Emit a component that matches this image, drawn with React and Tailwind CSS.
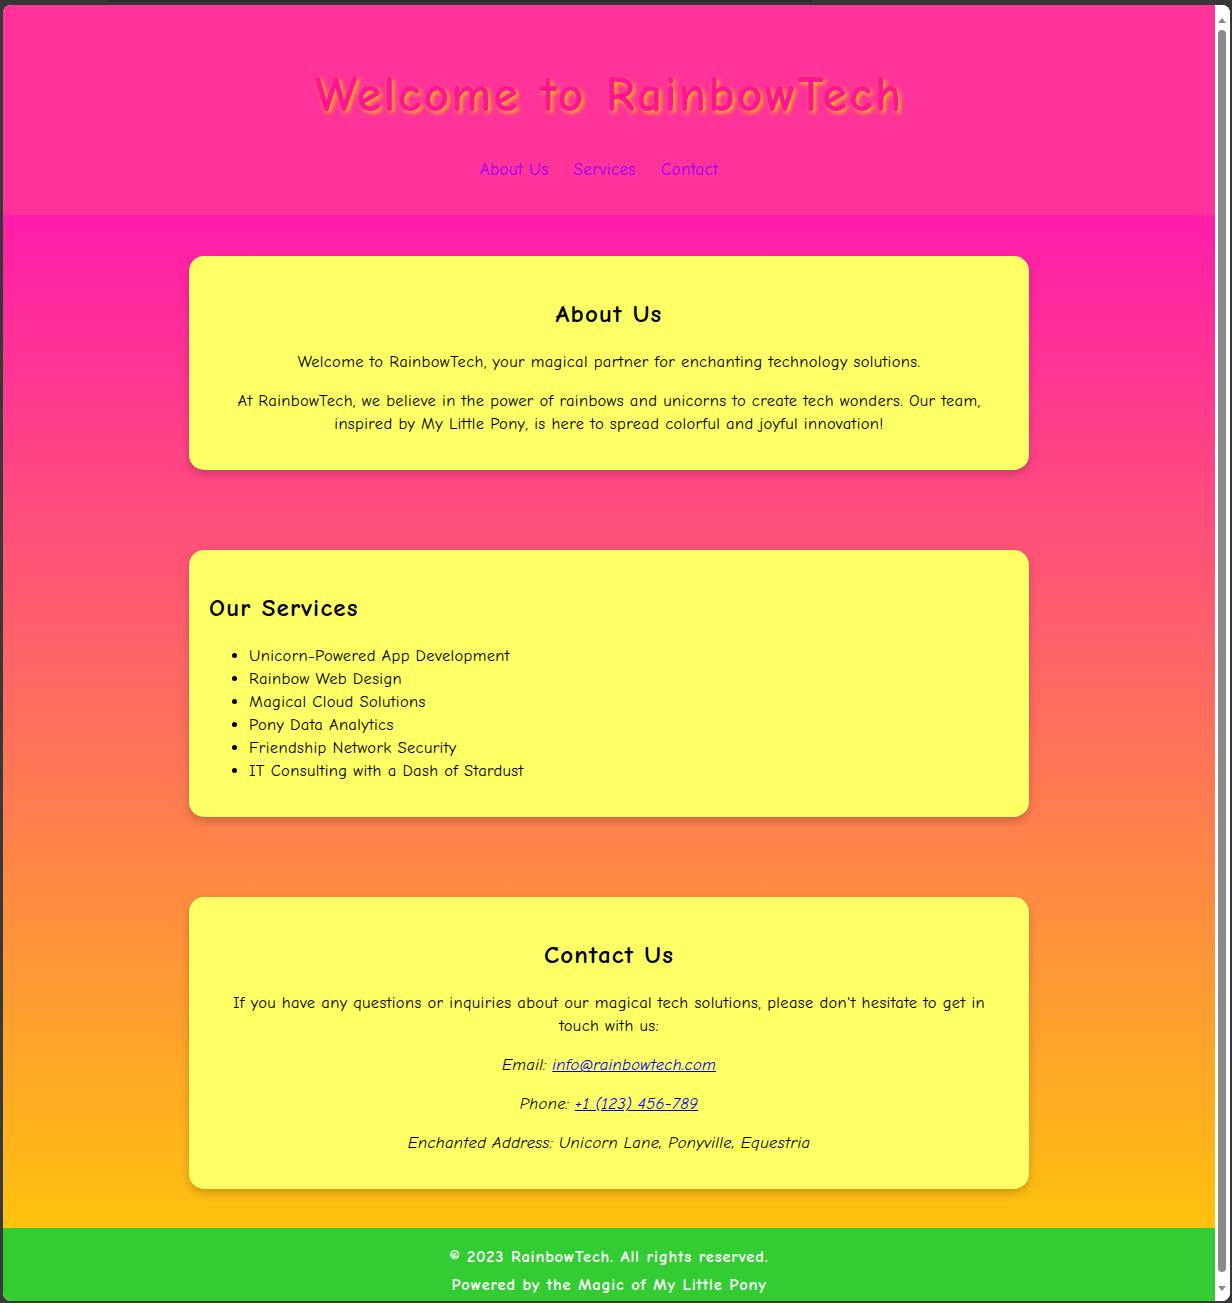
import React from "react";

const font = { fontFamily: '"Comic Sans MS", "Comic Neue", "Open Sans", sans-serif' };

export default function App() {
  return (
    <div className="w-[1232px] h-[1303px] bg-[#383838] relative overflow-hidden">
      <div className="absolute top-0 left-[108px] w-[704px] h-[2px] bg-[#2a2a2a] rounded-bl-[4px]" />
      <div className="absolute left-[3px] top-[5px] w-[1227px] h-[1296px] rounded-[8px] overflow-hidden flex bg-white">
        <div className="w-[1212px] h-full overflow-hidden flex flex-col text-[16.5px] tracking-[0.35px] text-black" style={font}>
          <header className="bg-[#ff3399] h-[210px] shrink-0 flex flex-col items-center">
            <h1
              className="mt-[57px] text-[50px] tracking-[2.2px] font-bold leading-[67px] text-[#ff1493]"
              style={{ textShadow: "2px 2px 4px #ffcc00" }}
            >
              Welcome to RainbowTech
            </h1>
            <nav className="mt-[29px]">
              <ul className="flex gap-[25px] pr-[20px] leading-[23px] text-[17px] tracking-[0.35px]">
                <li><a className="text-[#9b00ff]">About Us</a></li>
                <li><a className="text-[#9b00ff]">Services</a></li>
                <li><a className="text-[#9b00ff]">Contact</a></li>
              </ul>
            </nav>
          </header>
          <main className="flex-1 bg-[linear-gradient(to_bottom,#ff1cab,#ffc20e)] pt-[41px] pb-[39px] flex flex-col gap-[80px] items-center">
            <section className="w-[840px] bg-[#ffff66] rounded-[15px] px-[20px] pt-[21px] pb-[19px] shadow-[0_4px_10px_rgba(0,0,0,0.2)] text-center">
              <h2 className="mt-[20px] mb-[20px] text-[25px] tracking-[1.2px] font-bold leading-[33px]">About Us</h2>
              <p className="leading-[23px]">Welcome to RainbowTech, your magical partner for enchanting technology solutions.</p>
              <p className="mt-[16px] mb-[16px] leading-[23px]">
                At RainbowTech, we believe in the power of rainbows and unicorns to create tech wonders. Our team, inspired by My Little Pony, is here to spread colorful and joyful innovation!
              </p>
            </section>
            <section className="w-[840px] bg-[#ffff66] rounded-[15px] px-[20px] pt-[21px] pb-[19px] shadow-[0_4px_10px_rgba(0,0,0,0.2)]">
              <h2 className="mt-[20px] mb-[20px] text-[25px] tracking-[1.2px] font-bold leading-[33px]">Our Services</h2>
              <ul className="list-disc pl-[40px] mb-[16px] leading-[23px]">
                <li>Unicorn-Powered App Development</li>
                <li>Rainbow Web Design</li>
                <li>Magical Cloud Solutions</li>
                <li>Pony Data Analytics</li>
                <li>Friendship Network Security</li>
                <li>IT Consulting with a Dash of Stardust</li>
              </ul>
            </section>
            <section className="w-[840px] bg-[#ffff66] rounded-[15px] px-[20px] pt-[21px] pb-[19px] shadow-[0_4px_10px_rgba(0,0,0,0.2)] text-center">
              <h2 className="mt-[20px] mb-[20px] text-[25px] tracking-[1.2px] font-bold leading-[33px]">Contact Us</h2>
              <p className="leading-[23px] px-[10px]">
                If you have any questions or inquiries about our magical tech solutions, please don't hesitate to get in touch with us:
              </p>
              <p className="mt-[16px] leading-[23px] italic">
                Email: <a className="text-[#0000ee] underline">info@rainbowtech.com</a>
              </p>
              <p className="mt-[16px] leading-[23px] italic">
                Phone: <a className="text-[#0000ee] underline">+1 (123) 456-789</a>
              </p>
              <p className="mt-[16px] mb-[16px] leading-[23px] italic">
                Enchanted Address: Unicorn Lane, Ponyville, Equestria
              </p>
            </section>
          </main>
          <footer className="bg-[#33cc33] text-white text-center pt-[17px] pb-[20px] shrink-0 flex flex-col gap-[5px] leading-[23px] tracking-[0.8px] font-bold">
            <p>© 2023 RainbowTech. All rights reserved.</p>
            <p>Powered by the Magic of My Little Pony</p>
          </footer>
        </div>
        <div className="w-[15px] h-full bg-white relative shrink-0">
          <div className="absolute top-[13px] left-[3px] w-0 h-0 border-l-[4px] border-r-[4px] border-b-[5px] border-l-transparent border-r-transparent border-b-[#8a8a8a]" />
          <div className="absolute top-[25px] bottom-[29px] left-[3px] w-[8px] rounded-full bg-[#8a8a8a]" />
          <div className="absolute bottom-[10px] left-[3px] w-0 h-0 border-l-[4px] border-r-[4px] border-t-[5px] border-l-transparent border-r-transparent border-t-[#8a8a8a]" />
        </div>
      </div>
    </div>
  );
}
